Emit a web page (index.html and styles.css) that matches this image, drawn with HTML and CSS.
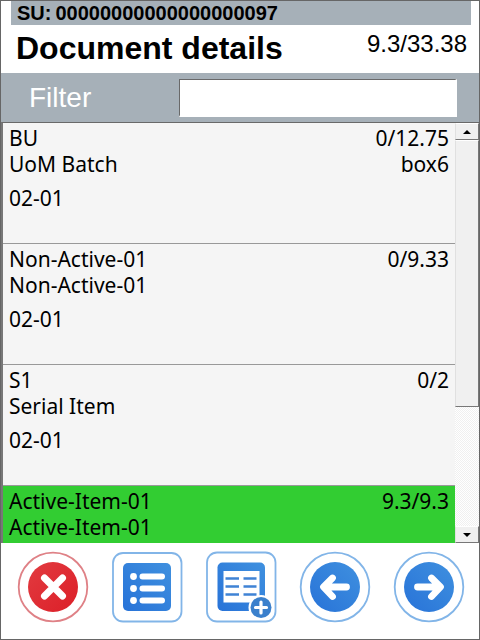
FILE: index.html
```html
<!DOCTYPE html>
<html lang="en">
<head>
<meta charset="utf-8">
<meta name="viewport" content="width=device-width, initial-scale=1">
<title>Document details</title>
<link rel="stylesheet" href="styles.css">
</head>
<body>
<main class="window">
  <div class="unit">SU:<span class="unit-number">00000000000000000097</span></div>
  <header class="heading">
    <h1 class="title">Document details</h1>
    <span class="total">9.3/33.38</span>
  </header>
  <div class="filter">
    <label class="filter-label" for="filter">Filter</label>
    <input class="filter-input" id="filter" type="text">
  </div>
  <section class="list">
    <ul class="rows">
      <li class="row">
        <div class="line"><span>BU</span><span>0/12.75</span></div>
        <div class="line"><span>UoM Batch</span><span>box6</span></div>
        <div class="line bin">02-01</div>
      </li>
      <li class="row">
        <div class="line"><span>Non-Active-01</span><span>0/9.33</span></div>
        <div class="line">Non-Active-01</div>
        <div class="line bin">02-01</div>
      </li>
      <li class="row">
        <div class="line"><span>S1</span><span>0/2</span></div>
        <div class="line">Serial Item</div>
        <div class="line bin">02-01</div>
      </li>
      <li class="row row-active">
        <div class="line"><span>Active-Item-01</span><span>9.3/9.3</span></div>
        <div class="line">Active-Item-01</div>
      </li>
    </ul>
    <div class="scrollbar">
      <button class="scroll-button" type="button" aria-label="Scroll up"><svg width="8" height="4" viewBox="0 0 8 4"><path d="M0 4L4 0L8 4Z"/></svg></button>
      <div class="thumb"></div>
      <div class="track"></div>
      <button class="scroll-button" type="button" aria-label="Scroll down"><svg width="8" height="4" viewBox="0 0 8 4"><path d="M0 0H8L4 4Z"/></svg></button>
    </div>
  </section>
  <footer class="toolbar">
    <button class="tool" type="button" aria-label="Cancel">
      <svg viewBox="0 0 72 72">
        <defs><linearGradient id="red" x1="0" y1="0" x2="1" y2="1"><stop offset="0" stop-color="#e23b40"/><stop offset="1" stop-color="#dc1f28"/></linearGradient></defs>
        <circle cx="36" cy="36" r="34.3" fill="#fff" stroke="#df8186" stroke-width="1.8"/>
        <circle cx="36" cy="36" r="25" fill="url(#red)"/>
        <path d="M27.5 27L45.5 45M45.5 27L27.5 45" stroke="#fff" stroke-width="7" stroke-linecap="round"/>
      </svg>
    </button>
    <button class="tool" type="button" aria-label="List">
      <svg viewBox="0 0 72 72">
        <defs><linearGradient id="blue" x1="1" y1="0" x2="0" y2="1"><stop offset="0" stop-color="#3f90df"/><stop offset="1" stop-color="#2873d8"/></linearGradient></defs>
        <rect x="2" y="2" width="68.5" height="68.5" rx="10" fill="#fff" stroke="#82b5e8" stroke-width="1.8"/>
        <rect x="12" y="12" width="48" height="48" rx="5" fill="url(#blue)"/>
        <g fill="#fff"><circle cx="22.5" cy="25.5" r="3.4"/><circle cx="22.5" cy="37.5" r="3.4"/><circle cx="22.5" cy="49.5" r="3.4"/></g>
        <path d="M31.5 25.5H51M31.5 37.5H51M31.5 49.5H51" stroke="#fff" stroke-width="6" stroke-linecap="round"/>
      </svg>
    </button>
    <button class="tool" type="button" aria-label="Add to list">
      <svg viewBox="0 0 72 72">
        <rect x="2" y="1.5" width="68.5" height="69" rx="10" fill="#fff" stroke="#82b5e8" stroke-width="1.8"/>
        <rect x="12.5" y="11.5" width="47.5" height="48.5" rx="5" fill="url(#blue)"/>
        <rect x="18.5" y="20" width="36" height="31.5" fill="#fff"/>
        <path d="M20.5 27.5H34M38.5 27.5H51.5M20.5 35.5H34M38.5 35.5H51.5M20.5 43.5H34M38.5 43.5H51.5" stroke="#3f83d5" stroke-width="2.6"/>
        <circle cx="56" cy="56.5" r="12.5" fill="#fff"/>
        <circle cx="56" cy="56.5" r="10.5" fill="#3b80cc"/>
        <path d="M50.5 56.5H61.5M56 51V62" stroke="#fff" stroke-width="3.2" stroke-linecap="round"/>
      </svg>
    </button>
    <button class="tool" type="button" aria-label="Previous">
      <svg viewBox="0 0 72 72">
        <circle cx="36" cy="36" r="34.3" fill="#fff" stroke="#82b5e8" stroke-width="1.8"/>
        <circle cx="36" cy="36" r="25" fill="url(#blue)"/>
        <path d="M47.5 36H25.5M33.500 27L24.5 36L33.5 45.5" fill="none" stroke="#fff" stroke-width="6.8" stroke-linecap="round" stroke-linejoin="round"/>
      </svg>
    </button>
    <button class="tool" type="button" aria-label="Next">
      <svg viewBox="0 0 72 72">
        <circle cx="36" cy="36" r="34.3" fill="#fff" stroke="#82b5e8" stroke-width="1.8"/>
        <circle cx="36" cy="36" r="25" fill="url(#blue)"/>
        <path d="M24.5 36H46.5M38.5 27L47.5 36L38.5 45.5" fill="none" stroke="#fff" stroke-width="6.8" stroke-linecap="round" stroke-linejoin="round"/>
      </svg>
    </button>
  </footer>
</main>
</body>
</html>
```
FILE: styles.css
```css
* {
  box-sizing: border-box;
}

body {
  margin: 0;
  background: #fff;
  color: #000;
  font-family: "Liberation Sans", Arial, sans-serif;
}

.window {
  display: flex;
  flex-direction: column;
  height: 100vh;
  border: 1px solid #666;
}

.unit {
  display: flex;
  gap: 4px;
  margin: 0 8px 0 10px;
  padding: 0 6px;
  background: #a6b0b8;
  font-size: 20px;
  font-weight: bold;
  line-height: 24px;
}

.heading {
  display: flex;
  justify-content: space-between;
  height: 48px;
  padding: 0 12px 0 15px;
}

.title {
  margin: 0;
  font-size: 32px;
  line-height: 46px;
}

.total {
  font-size: 24px;
  line-height: 38px;
}

.filter {
  display: flex;
  align-items: center;
  height: 49px;
  padding: 0 22px 0 28px;
  background: #a6b0b8;
}

.filter-label {
  width: 150px;
  color: #fff;
  font-size: 28px;
  line-height: 48px;
}

.filter-input {
  flex: 1;
  min-width: 0;
  height: 38px;
  padding: 0 4px;
  border: 2px solid;
  border-color: #696969 #fff #fff #696969;
  border-width: 1px 2px 2px 1px;
  border-radius: 0;
  background: #fff;
  font: inherit;
  font-size: 24px;
}

.list {
  display: flex;
  flex: 1;
  min-height: 0;
  border-top: 1px solid #696969;
  border-left: 2px solid #777;
  overflow: hidden;
}

.rows {
  flex: 1;
  margin: 0;
  padding: 0;
  background: #f5f5f5;
  font-family: "Noto Sans", Tahoma, sans-serif;
  font-size: 21px;
  line-height: 26px;
  list-style: none;
}

.row {
  height: 121px;
  padding: 2px 6px 0;
  border-bottom: 1px solid #999;
}

.row-active {
  background: #32cd32;
}

.line {
  display: flex;
  justify-content: space-between;
}

.bin {
  margin-top: 8px;
}

.scrollbar {
  display: flex;
  flex-direction: column;
  width: 24px;
}

.scroll-button,
.thumb {
  border: 1px solid;
  border-color: #fff #777 #777 #e0e0e0;
  background: #f0f0f0;
}

.scroll-button {
  display: flex;
  flex: none;
  align-items: center;
  justify-content: center;
  height: 17px;
  padding: 0;
}

.thumb {
  flex: 267;
}

.track {
  flex: 120;
  background: repeating-conic-gradient(#fff 0 25%, #f0f0f0 0 50%) 0 0 / 2px 2px;
}

.toolbar {
  display: flex;
  justify-content: space-between;
  padding: 8px 14px 16px 16px;
}

.tool {
  width: 72px;
  height: 72px;
  padding: 0;
  border: 0;
  background: none;
}

.tool svg {
  display: block;
  width: 100%;
  height: 100%;
}
```
